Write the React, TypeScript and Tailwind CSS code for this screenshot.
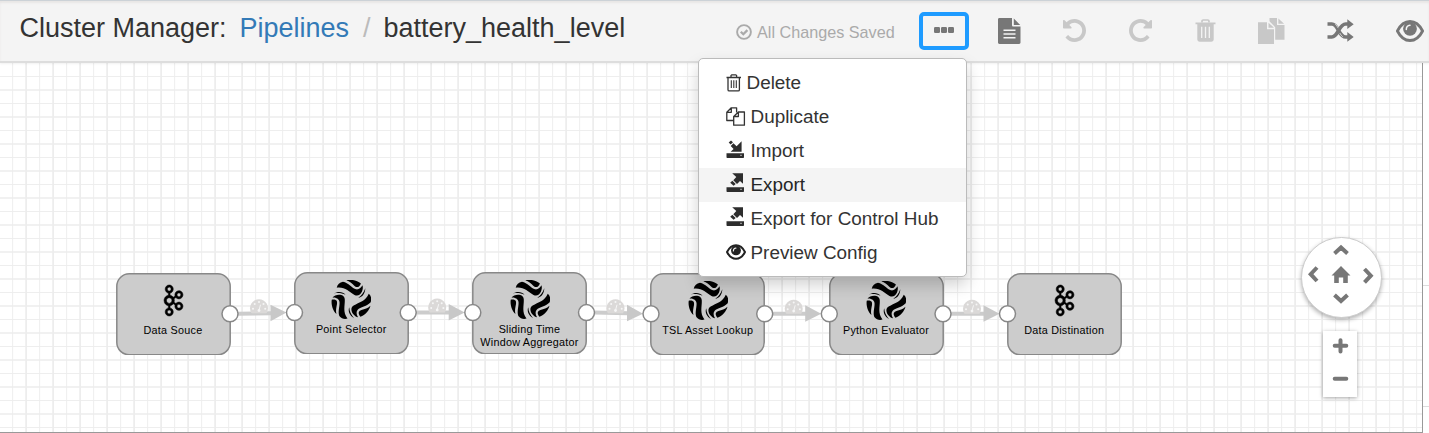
import React from "react";
import { SiApachekafka } from "react-icons/si";

const UNDO =
  "M1664 896q0 156-61 298t-164 245-245 164-298 61q-172 0-327-72.5t-264-204.5q-7-10-6.5-22.5t8.5-20.5l137-138q10-9 25-9 16 2 23 12 73 95 179 147t225 52q104 0 198.5-40.5t163.5-109.5 109.5-163.5 40.5-198.5-40.5-198.5-109.5-163.5-163.5-109.5-198.5-40.5q-98 0-188 35.5t-160 101.5l137 138q31 30 14 69-17 40-59 40h-448q-26 0-45-19t-19-45v-448q0-42 40-59 39-17 69 14l130 129q107-101 244.5-156.5t284.5-55.5q156 0 298 61t245 164 164 245 61 298z";

function UndoIcon({ className }: { className?: string }) {
  return (
    <svg viewBox="128 128 1536 1536" className={className} fill="currentColor">
      <path d={UNDO} />
    </svg>
  );
}

function CheckIcon() {
  return (
    <svg viewBox="0 0 16 16" className="h-4 w-4" fill="none" stroke="currentColor">
      <circle cx="8" cy="8" r="6.9" strokeWidth="1.9" />
      <path d="M4.8 7.7 7.3 10.2 11.4 6.1" strokeWidth="2.3" />
    </svg>
  );
}

function FileIcon() {
  return (
    <svg viewBox="0 0 23 26" className="h-[26px] w-[23px]">
      <path d="M1.4 0H14v7.2c0 .8.6 1.4 1.4 1.4h7.1v16c0 .8-.6 1.4-1.4 1.4H1.4C.6 26 0 25.400 0 24.600V1.400C0 .6.6 0 1.400 0ZM15.800.4l6.400 6.500h-6.400Z" fill="#777" />
      <path d="M5.500 12.200h12M5.500 16h12M5.500 19.800h12" stroke="#f4f4f4" strokeWidth="1.500" />
    </svg>
  );
}

function TrashIcon() {
  return (
    <svg viewBox="0 0 21 23" className="h-[23px] w-[21px]">
      <path d="M7 3.500V2.200C7 1.500 7.500 1 8.200 1h4.600c.7 0 1.200.5 1.200 1.200v1.300" fill="none" stroke="currentColor" strokeWidth="1.700" />
      <path d="M.5 3.600h20v1.700h-1.800v14.900c0 1.500-1 2.500-2.400 2.500H4.700c-1.400 0-2.400-1-2.400-2.500V5.300H.5Z" fill="currentColor" />
      <path d="M6.700 7.800v11.300M10.500 7.800v11.300M14.300 7.800v11.300" stroke="#f4f4f4" strokeWidth="1.300" />
    </svg>
  );
}

function PasteIcon() {
  return (
    <svg viewBox="0 0 27 26" className="h-[26px] w-[27px]" fill="currentColor">
      <path d="M11.500 0h7.500v7h7.500v14.800h-9.300V9.300L11.500 3.300Z" />
      <path d="m20.400.5 5.700 5.300h-5.700Z" />
      <path d="M0 4.200h9v7h7V26H0Z" />
      <path d="m10.500 4.700 5.500 5.100h-5.500Z" />
    </svg>
  );
}

function ShuffleIcon() {
  return (
    <svg viewBox="0 0 27 23" className="h-[23px] w-[27px]">
      <path d="M.5 5h4.300C11.500 5 11.500 18 18.800 18h2.600M.5 18h4.300C11.500 18 11.500 5 18.800 5h2.600" fill="none" stroke="#777" strokeWidth="3.700" />
      <path d="m20.300.3 6.400 4.900-6.400 4.900ZM20.300 13l6.400 4.900-6.400 4.900Z" fill="#777" />
      <path d="M8.200 5.200c1.300 1 2.200 2.300 3 3.900M12.800 14c.8 1.600 1.700 2.900 3 3.800" fill="none" stroke="#f4f4f4" strokeWidth=".7" />
    </svg>
  );
}

function EyeIcon({ className }: { className?: string }) {
  return (
    <svg viewBox="0 0 28 22" className={className}>
      <path d="M1.400 11C4.300 5.200 8.700 1.500 14 1.500S23.700 5.200 26.600 11C23.700 16.800 19.300 20.500 14 20.500S4.300 16.800 1.400 11Z" fill="none" stroke="currentColor" strokeWidth="2.800" strokeLinejoin="round" />
      <circle cx="14" cy="8.800" r="6.900" fill="currentColor" />
      <path d="M10.300 9.500c0-2.600 1.400-4 3.700-4.200" fill="none" stroke="#f4f4f4" strokeWidth="1.500" strokeLinecap="round" />
    </svg>
  );
}

function MenuTrash() {
  return (
    <svg viewBox="0 0 16 18" className="-mt-px h-[18px] w-4" fill="none" stroke="#333">
      <path d="M.5 3.500h14.500M5 3V1.500l.8-.7h4l.8.7V3M2 4v11.700c0 .7.400 1.200 1.200 1.200h9c.8 0 1.200-.5 1.200-1.200V4" strokeWidth="1.300" />
      <path d="M5.300 6.200v7.800M7.800 6.200v7.800M10.300 6.200v7.800" strokeWidth="1.100" />
    </svg>
  );
}

function MenuCopy() {
  return (
    <svg viewBox="0 0 20 19" className="-mt-px h-[19px] w-5" fill="none" stroke="#333" strokeWidth="1.300" strokeLinejoin="round">
      <path d="M7.700 13.500H.8V5.300L5.300.8h5.300v4.700M5.300.8v4.500H.8" />
      <path d="M7.700 9.500 12.400 5h6v13.200H7.700ZM12.400 5v4.500H7.700" />
    </svg>
  );
}

function MenuImport() {
  return (
    <svg viewBox="0 0 19 20" className="-mt-px h-5 w-[19px]" fill="#2d2d2d">
      <path d="M.5 14.200h17.500v3.700c0 .6-.4 1-1 1H1.500c-.6 0-1-.4-1-1Z" />
      <path d="M15.600 2.300v10.500H4.600l3-2.800-2.900-3 2.700-2.700 3.200 2.900Z" />
      <path d="m2.700 3.400 2.300-2 2 1.900-2.400 2.100Z" />
      <path d="m14 16.300h2" stroke="#aaa" strokeWidth="1" />
    </svg>
  );
}

function MenuExport() {
  return (
    <svg viewBox="0 0 19 20" className="-mt-px h-5 w-[19px]" fill="#2d2d2d">
      <path d="M.5 14.200h17.500v3.700c0 .6-.4 1-1 1H1.500c-.6 0-1-.4-1-1Z" />
      <path d="M6.200.3H17v10.500l-3-2.900-3 3-3.700-3.600 3-3.400Z" />
      <path d="m4.200 9.800 2.100-2 3.400 3.300-2.100 1.700Z" />
      <path d="m14 16.300h2" stroke="#aaa" strokeWidth="1" />
    </svg>
  );
}

function SwirlBlade() {
  return (
    <>
      <path d="M-18.500-2.500C-16-6-6.500-7-6.200-.5-6 6-8.500 12-3.500 18.500-6.500 19.600-9.500 18.500-11.700 16-13.500 11-10.500 4.500-11.700 1-12.800-2-16-2.500-18.500-2.500Z" />
      <path d="M-19.300-.3c4.500-.5 5.800 1 5.300 4.300-.6 3.700-1.500 6.200-.6 10C-18 11-20 5-19.300-.3Z" />
      <path d="M-17.300-6.500C-13-9-8-8.500-5.500-5.200-9-7-13-7.300-17.300-6.500Z" />
    </>
  );
}

function SwirlLogo() {
  return (
    <svg viewBox="-20 -20 40 40" className="h-10 w-10" fill="#000">
      <g><SwirlBlade /></g>
      <g transform="rotate(120)"><SwirlBlade /></g>
      <g transform="rotate(240)"><SwirlBlade /></g>
    </svg>
  );
}

function Gauge({ x, y }: { x: number; y: number }) {
  return (
    <g transform={`translate(${x} ${y})`}>
      <path d="M-7.800 5A9 9 0 1 1 7.800 5Q7.500 5.500 7 5.500H-7Q-7.500 5.500-7.800 5Z" fill="#dbd9d8" />
      <g fill="#f6f6f6">
        <circle cx="-6" cy="1" r="1" />
        <circle cx="-4.300" cy="-3.800" r="1" />
        <circle cx="0" cy="-5.800" r="1" />
        <circle cx="4.500" cy="-3.800" r="1" />
        <circle cx="6.200" cy="1" r="1" />
        <circle cx="0" cy="2.800" r="1.400" />
      </g>
      <path d="m0 2.500 1.500-5.500" stroke="#f6f6f6" strokeWidth="1" />
    </g>
  );
}

type Stage = { x: number; y: number; kind: "kafka" | "swirl"; lines: string[] };

const stages: Stage[] = [
  { x: 115.500, y: 272.800, kind: "kafka", lines: ["Data Souce"] },
  { x: 293.700, y: 271.600, kind: "swirl", lines: ["Point Selector"] },
  { x: 472, y: 271.600, kind: "swirl", lines: ["Sliding Time", "Window Aggregator"] },
  { x: 650.200, y: 272.800, kind: "swirl", lines: ["TSL Asset Lookup"] },
  { x: 828.500, y: 272.800, kind: "swirl", lines: ["Python Evaluator"] },
  { x: 1006.700, y: 272.800, kind: "kafka", lines: ["Data Distination"] },
];

function StageNode({ stage }: { stage: Stage }) {
  return (
    <div
      className="absolute h-[82.500px] w-[115px]"
      style={{ left: stage.x, top: stage.y - 63 }}
    >
      <svg className="absolute inset-0 h-full w-full" viewBox="0 0 115 82.500">
        <rect x="0.800" y="0.800" width="113.400" height="81" rx="12.500" fill="#ccc" stroke="#888" strokeWidth="1.500" />
      </svg>
      <div className="relative flex flex-col items-center pt-px">
        <div className="flex h-[50px] items-center justify-center pt-1">
          {stage.kind === "kafka" ? (
            <SiApachekafka size={31} color="#000" className="overflow-visible stroke-black [stroke-width:0.4px]" />
          ) : (
            <SwirlLogo />
          )}
        </div>
        <div className="text-center text-[10.800px] leading-[13px] tracking-[0.240px] whitespace-nowrap text-black">
          {stage.lines.map((line) => (
            <div key={line}>{line}</div>
          ))}
        </div>
      </div>
    </div>
  );
}

function Links() {
  return (
    <svg className="absolute top-0 left-0 h-[370px] w-[1423px]" viewBox="0 63 1423 370">
      {stages.slice(0, -1).map((s, i) => {
        const next = stages[i + 1];
        const y1 = s.y + 41;
        const y2 = next.y + 41;
        const mid = (y1 + y2) / 2;
        return (
          <g key={s.x}>
            <path d={`M${s.x + 122} ${y1}L${s.x + 156} ${mid}`} stroke="#ccc" strokeWidth="4" />
            <Gauge x={s.x + 143.500} y={mid - 5.500} />
            <path d={`M${s.x + 155} ${mid - 8.500}L${s.x + 171} ${y2}L${s.x + 155} ${mid + 8}Z`} fill="#c8c8c8" />
            <circle cx={s.x + 114.500} cy={y1} r="8" fill="#fff" stroke="#888" strokeWidth="1.500" />
            <circle cx={next.x + 0.800} cy={y2} r="8" fill="#fff" stroke="#888" strokeWidth="1.500" />
          </g>
        );
      })}
    </svg>
  );
}

const columns = Array.from({ length: 106 }, (_, i) => i);
const rows = Array.from({ length: 28 }, (_, i) => i);

function CanvasGrid() {
  return (
    <svg className="absolute top-0 left-0 h-[369px] w-[1422px]" stroke="#ececec">
      {columns.map((i) => (
        <path key={`c${i}`} d={`M${12.600 + i * 13.500} 0V369`} strokeWidth={i % 2 ? 1.700 : 0.900} />
      ))}
      {rows.map((i) => (
        <path key={`r${i}`} d={`M0 ${13.500 + i * 13.500}H1422`} strokeWidth={i % 2 ? 1.700 : 0.900} />
      ))}
    </svg>
  );
}

function NavPad() {
  return (
    <div className="absolute top-[174px] left-[1301px] h-[81px] w-[81px] rounded-full border border-[#ccc] bg-white shadow-[0_2px_4px_rgba(0,0,0,0.3)]">
      <svg viewBox="0 0 79 79" className="h-full w-full" fill="none" stroke="#777" strokeWidth="4">
        <path d="m32.500 15.500 6.500-6 6.500 6M32.500 57l6.500 6 6.500-6M15 29.500l-6.300 6.700L15 43M62.500 31l6.300 6.700-6.300 6.700" />
        <path d="m39 28 9.500 9.500h-2.700V45h-4.600v-5.500h-4.400V45h-4.600v-7.500h-2.700Z" fill="#777" stroke="none" />
      </svg>
    </div>
  );
}

function ZoomBox() {
  return (
    <div className="absolute top-[268px] left-[1323px] flex h-[66px] w-[34px] flex-col bg-white shadow-[0_1px_4px_rgba(0,0,0,0.35)]">
      <svg viewBox="0 0 34 66" className="h-full w-full" stroke="#777" strokeWidth="4" strokeLinecap="round">
        <path d="M11.700 14.800h11.600M17.500 9.200v11.200M11.700 47.800h11.600" />
      </svg>
    </div>
  );
}

const menuItems = [
  { label: "Delete", icon: <MenuTrash />, slot: "w-[20.500px]" },
  { label: "Duplicate", icon: <MenuCopy />, slot: "w-[24.500px]" },
  { label: "Import", icon: <MenuImport />, slot: "w-[24.500px] -mt-[3px]" },
  { label: "Export", icon: <MenuExport />, slot: "w-[24.500px] -mt-[3px]", active: true },
  { label: "Export for Control Hub", icon: <MenuExport />, slot: "w-[24.500px] -mt-[3px]" },
  { label: "Preview Config", icon: <EyeIcon className="h-[16px] w-5 text-[#222]" />, slot: "w-[24.500px] -mt-[2px]" },
];

function ActionMenu() {
  return (
    <ul className="absolute top-[58px] left-[698px] z-20 h-[219px] w-[269px] rounded-[5px] border border-[#bbb] bg-white pt-[7px] text-[18.900px] leading-[34px] text-[#333] shadow-[0_8px_16px_rgba(0,0,0,0.18)]">
      {menuItems.map((m) => (
        <li
          key={m.label}
          className={m.active ? "flex h-[34px] items-center bg-[#f4f4f4] pl-[27px] text-[#262626]" : "flex h-[34px] items-center pl-[27px]"}
        >
          <span className={`${m.slot} flex shrink-0`}>{m.icon}</span>
          <span className="whitespace-nowrap">{m.label}</span>
        </li>
      ))}
    </ul>
  );
}

function Header() {
  return (
    <header className="relative z-10 flex h-[63px] shrink-0 border-t border-b-2 border-t-[#ccd2d7] border-b-[#ddd] bg-[#f4f4f4] shadow-[inset_0_2px_2px_rgba(100,80,60,0.080),0_1px_2px_rgba(0,0,0,0.060)]">
      <h1 className="flex w-[736px] shrink-0 pt-[8px] pl-[19.500px] text-[27px] leading-[38px] whitespace-nowrap text-[#333]">
        <span className="w-[220px]">Cluster Manager:</span>
        <span className="w-[123.500px] text-[#337ab7]">Pipelines</span>
        <span className="w-[20.500px] text-[#bbb]">/</span>
        <span>battery_health_level</span>
      </h1>
      <div className="flex w-[183px] shrink-0 gap-[5px] pt-[23px] text-[16.200px] leading-[18px] whitespace-nowrap text-[#aaa]">
        <CheckIcon />
        <span className="-mt-px">All Changes Saved</span>
      </div>
      <button className="mt-[11px] flex h-[38px] w-[50px] shrink-0 items-center justify-center gap-[1.500px] rounded-[5px] border-4 border-[#1e9bff] pb-[2px]">
        <span className="h-[5.500px] w-[5.500px] rounded-[1.200px] bg-[#777]" />
        <span className="h-[5.500px] w-[5.500px] rounded-[1.200px] bg-[#777]" />
        <span className="h-[5.500px] w-[5.500px] rounded-[1.200px] bg-[#777]" />
      </button>
      <div className="flex h-[59px] shrink-0 items-center pl-[28.500px] text-[#c8c8c8]">
        <div className="w-[65px]"><FileIcon /></div>
        <div className="w-[66px]"><UndoIcon className="h-[23px] w-[23px]" /></div>
        <div className="w-[66px]"><UndoIcon className="h-[23px] w-[23px] -scale-x-100" /></div>
        <div className="w-[63.500px]"><TrashIcon /></div>
        <div className="w-[69px]"><PasteIcon /></div>
        <div className="w-[69px]"><ShuffleIcon /></div>
        <EyeIcon className="h-[22px] w-7 text-[#777]" />
      </div>
    </header>
  );
}

export default function App() {
  return (
    <div className="relative flex h-[433px] w-[1429px] flex-col overflow-hidden bg-white font-['Liberation_Sans',Arial,sans-serif]">
      <Header />
      <div className="flex h-[370px]">
        <main className="relative w-[1423px] shrink-0 overflow-hidden border-r border-b border-[#999]">
          <CanvasGrid />
          {stages.map((s) => (
            <StageNode key={s.x} stage={s} />
          ))}
          <Links />
          <NavPad />
          <ZoomBox />
        </main>
        <aside className="flex w-[6px] flex-col">
          <div className="h-[223px] border-b border-[#ddd]" />
          <div className="h-[121px] border-b border-[#ddd]" />
        </aside>
      </div>
      <ActionMenu />
    </div>
  );
}
